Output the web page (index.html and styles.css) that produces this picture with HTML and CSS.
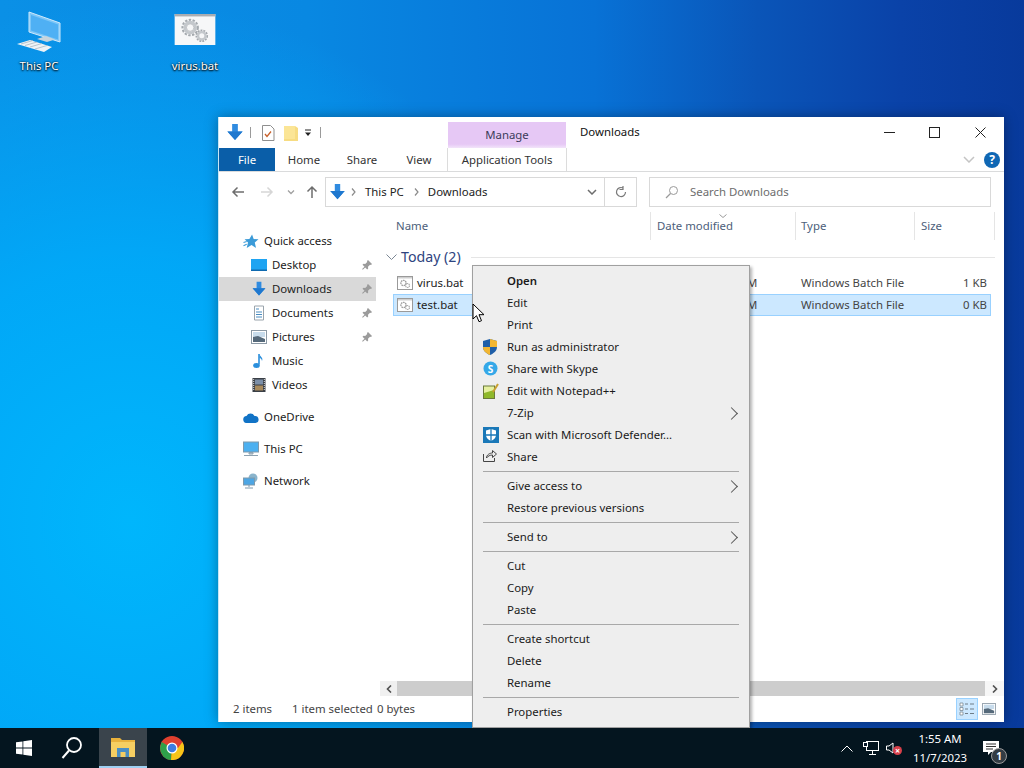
FILE: index.html
```html
<!DOCTYPE html>
<html lang="en">
<head>
  <meta charset="UTF-8" />
  <title>Downloads</title>
  <link rel="stylesheet" href="styles.css">
</head>
<body>
  <svg class="sprite" width="0" height="0">
    <defs>
      <symbol id="dl" viewBox="0 0 18 20">
        <path d="M6 1h6v8h5l-8 9-8-9h5z" fill="#2f8be0"/>
        <path d="M1 9h16l-8 9z" fill="#1f78cf"/>
      </symbol>
      <symbol id="bat" viewBox="0 0 16 14">
        <rect x=".5" y=".5" width="15" height="13" fill="#fff" stroke="#9a9a9a"/>
        <rect x="1" y="1" width="14" height="1.5" fill="#cfcfcf"/>
        <circle cx="6.5" cy="7" r="2.6" fill="none" stroke="#9a9a9a" stroke-width="1.3" stroke-dasharray="1.6 .7"/>
        <circle cx="10.5" cy="9.5" r="2" fill="none" stroke="#a8a8a8" stroke-width="1.2" stroke-dasharray="1.3 .6"/>
      </symbol>
      <symbol id="pin" viewBox="0 0 10 10">
        <path d="M6 0l4 4-1 1-1-.3-2 2 .2 1.8-1 .9-2-2-2.400 2.400-.7-.7L2.500 6.700l-2-2 1-1 1.700.2 2-2L5 1z" fill="#9b9b9b"/>
      </symbol>
      <symbol id="gear" viewBox="0 0 42 32">
        <circle cx="16" cy="14" r="5.500" fill="none" stroke="#c4c8cc" stroke-width="3"/>
        <circle cx="16" cy="14" r="8" fill="none" stroke="#a4a9ae" stroke-width="2" stroke-dasharray="2.500 1.500"/>
        <circle cx="16" cy="14" r="3.800" fill="none" stroke="#a4a9ae" stroke-width=".6"/>
        <circle cx="28" cy="22.500" r="3.800" fill="none" stroke="#c4c8cc" stroke-width="2.400"/>
        <circle cx="28" cy="22.500" r="5.700" fill="none" stroke="#a4a9ae" stroke-width="1.600" stroke-dasharray="2 1.100"/>
      </symbol>
      <symbol id="pic" viewBox="0 0 16 14">
        <rect x=".5" y=".5" width="15" height="13" fill="#fff" stroke="#8c9aa6"/>
        <rect x="2" y="2" width="12" height="5" fill="#c8dcec"/>
        <path d="M2 7l5-1 7 3v3H2z" fill="#55697a"/>
      </symbol>
    </defs>
  </svg>

  <div class="wall"></div>

  <div class="desk-icon desk-pc">
    <svg width="48" height="44" viewBox="0 0 48 44">
      <path d="M14 1l31 11v19L14 21z" fill="#7cc6f8" stroke="#cfe9fb"/>
      <path d="M16 4l27 9.500v15L16 19.500z" fill="#4fb0f4"/>
      <path d="M22 28l10 3 8-2.500-9-3.500z" fill="#c8d4dc"/>
      <path d="M2 33l13-4 22 7-8 5z" fill="#eef3f6"/>
      <path d="M6 33l12-3.500M10 34.500l12-3.500M15 36l12-3.500M20 38l12-3.500" stroke="#a9b8c2" stroke-width=".8"/>
    </svg>
    <span>This PC</span>
  </div>
  <div class="desk-icon desk-bat">
    <svg width="42" height="31" viewBox="0 0 42 32">
      <rect width="42" height="32" fill="#f6f7f8"/>
      <rect width="42" height="2.500" fill="#a9adb2"/>
      <use href="#gear" width="42" height="32"/>
    </svg>
    <span>virus.bat</span>
  </div>

  <div class="window">
    <div class="titlebar">
      <div class="qat">
        <svg class="q-dl" width="18" height="19"><use href="#dl"/></svg>
        <i class="q-sep"></i>
        <svg class="q-doc" width="14" height="16" viewBox="0 0 14 16">
          <path d="M1.500.5h8l3.500 3.500v11.500h-11.500z" fill="#fff" stroke="#8f8f8f"/>
          <path d="M4 9l2 2.500 4-5" fill="none" stroke="#c8602a" stroke-width="1.300"/>
        </svg>
        <svg class="q-folder" width="14" height="16" viewBox="0 0 14 16">
          <path d="M0 1h11l3 2v13H0z" fill="#f7dc82"/>
          <path d="M0 1h11v13H0z" fill="#fbe596"/>
        </svg>
        <svg class="q-drop" width="8" height="8" viewBox="0 0 8 8">
          <path d="M1 1h6" stroke="#222"/><path d="M1 3.500h6L4 7z" fill="#222"/>
        </svg>
        <i class="q-sep q-sep2"></i>
      </div>
      <div class="manage">Manage</div>
      <div class="win-title">Downloads</div>
      <div class="controls">
        <button class="ctl">
          <svg width="11" height="11"><path d="M0 5.500h11" stroke="#222"/></svg>
        </button>
        <button class="ctl">
          <svg width="11" height="11"><rect x=".5" y=".5" width="10" height="10" fill="none" stroke="#222"/></svg>
        </button>
        <button class="ctl">
          <svg width="11" height="11"><path d="M.5.500l10 10M10.500.500l-10 10" stroke="#222"/></svg>
        </button>
      </div>
    </div>

    <div class="ribbon">
      <div class="tab tab-file">File</div>
      <div class="tab tab-home">Home</div>
      <div class="tab tab-home">Share</div>
      <div class="tab tab-view">View</div>
      <div class="tab tab-tools">Application Tools</div>
      <div class="ribbon-right">
        <svg width="12" height="7" viewBox="0 0 12 7"><path d="M1 1l5 5 5-5" fill="none" stroke="#c4c4c4" stroke-width="1.500"/></svg>
        <div class="help">?</div>
      </div>
    </div>

    <div class="addrbar">
      <div class="navbtns">
        <svg class="nb nb-back" width="14" height="12" viewBox="0 0 14 12"><path d="M13 6H2M6.500 1.500L2 6l4.500 4.500" fill="none" stroke="#6d6d6d" stroke-width="1.500"/></svg>
        <svg class="nb nb-fwd" width="14" height="12" viewBox="0 0 14 12"><path d="M1 6h11M7.500 1.500L12 6l-4.500 4.500" fill="none" stroke="#d6d6d6" stroke-width="1.500"/></svg>
        <svg class="nb nb-hist" width="8" height="5" viewBox="0 0 8 5"><path d="M1 .5l3 3 3-3" fill="none" stroke="#a0a0a0" stroke-width="1.300"/></svg>
        <svg class="nb nb-up" width="12" height="14" viewBox="0 0 12 14"><path d="M6 13V2M1.500 6.500L6 2l4.500 4.500" fill="none" stroke="#6d6d6d" stroke-width="1.500"/></svg>
      </div>
      <div class="addr">
        <svg class="a-dl" width="17" height="18"><use href="#dl"/></svg>
        <svg class="a-gt" width="5" height="8" viewBox="0 0 5 8"><path d="M1 .5L4 4 1 7.500" fill="none" stroke="#8a8a8a" stroke-width="1.200"/></svg>
        <span class="a-txt">This PC</span>
        <svg class="a-gt" width="5" height="8" viewBox="0 0 5 8"><path d="M1 .5L4 4 1 7.500" fill="none" stroke="#8a8a8a" stroke-width="1.200"/></svg>
        <span class="a-txt">Downloads</span>
        <svg class="a-drop" width="10" height="6" viewBox="0 0 10 6"><path d="M1 1l4 4 4-4" fill="none" stroke="#6d6d6d" stroke-width="1.500"/></svg>
      </div>
      <div class="refresh">
        <svg width="12" height="12" viewBox="0 0 12 12"><path d="M10.500 6A4.500 4.500 0 1 1 8 2M8 0v3.500h-3.500" fill="none" stroke="#7a7a7a" stroke-width="1.200"/></svg>
      </div>
      <div class="search">
        <svg width="14" height="14" viewBox="0 0 14 14"><circle cx="8.500" cy="5.500" r="4" fill="none" stroke="#9a9a9a"/><path d="M5.500 8.500L1 13" stroke="#9a9a9a" stroke-width="1.200"/></svg>
        <span>Search Downloads</span>
      </div>
    </div>

    <div class="body">
      <div class="nav">
        <div class="nav-row top">
          <svg width="16" height="15" viewBox="0 0 14 14"><path d="M8 .5l1.500 4.200L14 5 10.500 8l1.200 5L7.500 10.300 3 13l1.200-5L1 5l4.500-.3z" fill="#3c9bd8"/><path d="M0 8l3-1M0 11l3-1.500" stroke="#3c9bd8"/></svg>
          <span>Quick access</span>
        </div>
        <div class="nav-row sub">
          <svg width="16" height="13" viewBox="0 0 16 13"><rect width="16" height="12" fill="#1ea4f2"/><rect y="10.500" width="16" height="1.500" fill="#0f6ab0"/></svg>
          <span>Desktop</span>
          <svg class="pin" width="10" height="10"><use href="#pin"/></svg>
        </div>
        <div class="nav-row sub active">
          <svg width="16" height="16"><use href="#dl"/></svg>
          <span>Downloads</span>
          <svg class="pin" width="10" height="10"><use href="#pin"/></svg>
        </div>
        <div class="nav-row sub">
          <svg width="16" height="16" viewBox="0 0 16 16"><path d="M3.500 1h9v14h-9z" fill="#fff" stroke="#9aa4ac"/><path d="M5 4h3M5 7h6M5 9.500h6M5 12h6" stroke="#4a8cc0"/></svg>
          <span>Documents</span>
          <svg class="pin" width="10" height="10"><use href="#pin"/></svg>
        </div>
        <div class="nav-row sub">
          <svg width="16" height="14"><use href="#pic"/></svg>
          <span>Pictures</span>
          <svg class="pin" width="10" height="10"><use href="#pin"/></svg>
        </div>
        <div class="nav-row sub">
          <svg width="16" height="16" viewBox="0 0 16 16"><path d="M8 1v10.500" stroke="#2b8fdc" stroke-width="1.600"/><ellipse cx="5.500" cy="12.500" rx="3.300" ry="2.500" fill="#2b8fdc"/><path d="M8.500 1c.5 3 4 3.500 2.500 7-.2-2-1.500-3-2.500-3z" fill="#2b8fdc"/></svg>
          <span>Music</span>
        </div>
        <div class="nav-row sub">
          <svg width="16" height="16" viewBox="0 0 16 16"><rect x="1.500" y="1" width="13" height="14" fill="#3a3f46"/><rect x="4" y="2.500" width="8" height="5" fill="#7c8fa8"/><rect x="4" y="8.500" width="8" height="5" fill="#a88a5c"/><path d="M2.700 2v12M13.300 2v12" stroke="#ddd" stroke-dasharray="1 1"/></svg>
          <span>Videos</span>
        </div>
        <div class="nav-row top gap">
          <svg width="16" height="11" viewBox="0 0 16 11"><path d="M4 11a3.500 3.500 0 0 1-.5-7A4.500 4.500 0 0 1 11.500 4 3.500 3.500 0 0 1 12.500 11z" fill="#1173c6"/></svg>
          <span>OneDrive</span>
        </div>
        <div class="nav-row top gap">
          <svg width="16" height="16" viewBox="0 0 16 16"><rect x=".5" y="1" width="15" height="10" fill="#4cb0f0" stroke="#7f99ac"/><path d="M6 11.500h4v1.500H6zM1 14.500h14" stroke="#8ea2b0" fill="#b8c6d0"/></svg>
          <span>This PC</span>
        </div>
        <div class="nav-row top gap">
          <svg width="16" height="16" viewBox="0 0 16 16"><circle cx="10" cy="5" r="4.500" fill="#8ab4cc"/><rect x=".5" y="5" width="11" height="7" fill="#4da6e4" stroke="#7f99ac"/><path d="M6 12v2M2 15h8" stroke="#7f99ac"/></svg>
          <span>Network</span>
        </div>
      </div>

      <div class="list">
        <div class="list-head">
          <div class="col col-name">Name</div>
          <div class="col col-date">Date modified
            <svg class="sort" width="8" height="4" viewBox="0 0 8 4"><path d="M.5.500L4 3.500 7.500.500" fill="none" stroke="#9a9a9a"/></svg>
          </div>
          <div class="col col-type">Type</div>
          <div class="col col-size">Size</div>
        </div>

        <div class="group">
          <svg width="11" height="7" viewBox="0 0 11 7"><path d="M.5.500l5 5 5-5" fill="none" stroke="#7b8794"/></svg>
          <span>Today (2)</span>
          <i></i>
        </div>

        <div class="file">
          <svg width="16" height="14"><use href="#bat"/></svg>
          <span class="f-name">virus.bat</span>
          <span class="f-date">11/7/2023 1:55 AM</span>
          <span class="f-type">Windows Batch File</span>
          <span class="f-size">1 KB</span>
        </div>
        <div class="file selected">
          <svg width="16" height="14"><use href="#bat"/></svg>
          <span class="f-name">test.bat</span>
          <span class="f-date">11/7/2023 1:55 AM</span>
          <span class="f-type">Windows Batch File</span>
          <span class="f-size">0 KB</span>
        </div>

        <div class="hscroll">
          <div class="sb-btn"><svg width="6" height="8" viewBox="0 0 6 8"><path d="M5 .5L1.500 4 5 7.500" fill="none" stroke="#505050" stroke-width="1.600"/></svg></div>
          <div class="sb-thumb"></div>
          <div class="sb-btn sb-r"><svg width="6" height="8" viewBox="0 0 6 8"><path d="M1 .5L4.500 4 1 7.500" fill="none" stroke="#505050" stroke-width="1.600"/></svg></div>
        </div>
      </div>
    </div>

    <div class="statusbar">
      <span class="s-items">2 items</span>
      <span class="s-sel">1 item selected</span>
      <span>0 bytes</span>
      <div class="views">
        <div class="view on">
          <svg width="16" height="16" viewBox="0 0 16 16"><path d="M1 2h3v3H1zM1 6.500h3v3H1zM1 11h3v3H1z" fill="#fff" stroke="#7c8a96" stroke-width=".8"/><path d="M6 3h3M11 3h4M6 8h3M11 8h4M6 12.500h3M11 12.500h4" stroke="#6f7d88"/></svg>
        </div>
        <div class="view">
          <svg width="14" height="12"><use href="#pic"/></svg>
        </div>
      </div>
    </div>
  </div>

  <div class="menu">
    <div class="mi strong">Open</div>
    <div class="mi">Edit</div>
    <div class="mi">Print</div>
    <div class="mi">
      <svg class="mi-ico" width="14" height="16" viewBox="0 0 14 16">
        <path d="M7 0l7 2v6c0 4-3.500 6.500-7 8-3.500-1.500-7-4-7-8V2z" fill="#1f5fa8"/>
        <path d="M7 0l7 2v6H7zM7 8v8C3.500 14.500 0 12 0 8z" fill="#f2b632"/>
      </svg>
      Run as administrator
    </div>
    <div class="mi">
      <svg class="mi-ico" width="15" height="15" viewBox="0 0 15 15"><circle cx="7.500" cy="7.500" r="7" fill="#35a8e8"/><text x="7.500" y="11.500" class="sk">S</text></svg>
      Share with Skype
    </div>
    <div class="mi">
      <svg class="mi-ico" width="16" height="16" viewBox="0 0 16 16">
        <rect x=".5" y="3" width="11" height="12.500" fill="#e6f0a0" stroke="#6b7a3a"/>
        <path d="M1 10l10-3v8H1z" fill="#8fb82a"/>
        <path d="M10 9l5-8" stroke="#c8a030" stroke-width="2"/>
      </svg>
      Edit with Notepad++
    </div>
    <div class="mi arrow">7-Zip</div>
    <div class="mi">
      <svg class="mi-ico" width="16" height="16" viewBox="0 0 16 16">
        <rect width="16" height="16" fill="#1a78b8"/>
        <path d="M8 2l5 1.500V8c0 3-2.500 5-5 6-2.500-1-5-3-5-6V3.500z" fill="#fff"/>
        <path d="M8 2v12M3 8h10" stroke="#1a78b8" stroke-width="1.300"/>
      </svg>
      Scan with Microsoft Defender...
    </div>
    <div class="mi">
      <svg class="mi-ico" width="14" height="13" viewBox="0 0 14 13">
        <path d="M.5 5v7.500h11V9" fill="none" stroke="#444"/>
        <path d="M3.500 9c0-3 3-5 6-5V1.500l4 3.500-4 3.500V6C7 6 5 7 3.500 9z" fill="none" stroke="#444"/>
      </svg>
      Share
    </div>
    <div class="msep"></div>
    <div class="mi arrow">Give access to</div>
    <div class="mi">Restore previous versions</div>
    <div class="msep"></div>
    <div class="mi arrow">Send to</div>
    <div class="msep"></div>
    <div class="mi">Cut</div>
    <div class="mi">Copy</div>
    <div class="mi">Paste</div>
    <div class="msep"></div>
    <div class="mi">Create shortcut</div>
    <div class="mi">Delete</div>
    <div class="mi">Rename</div>
    <div class="msep"></div>
    <div class="mi">Properties</div>
  </div>

  <svg class="cursor" width="13" height="20" viewBox="0 0 13 20">
    <path d="M1 1v15l3.500-3.300 2.500 6 2.500-1-2.500-6h5z" fill="#fff" stroke="#000" stroke-width="1"/>
  </svg>

  <div class="taskbar">
    <div class="tb-btn">
      <svg width="16" height="16" viewBox="0 0 16 16"><path d="M0 2.300l6.500-.9v6.200H0zM7.300 1.300L16 0v7.600H7.300zM0 8.400h6.500v6.200L0 13.700zM7.300 8.400H16V16l-8.700-1.300z" fill="#fff"/></svg>
    </div>
    <div class="tb-btn">
      <svg width="22" height="24" viewBox="0 0 22 24"><circle cx="13" cy="9" r="7" fill="none" stroke="#fff" stroke-width="1.800"/><path d="M8 14.500L1.500 22" stroke="#fff" stroke-width="2"/></svg>
    </div>
    <div class="tb-btn tb-active">
      <svg width="24" height="20" viewBox="0 0 24 20">
        <path d="M0 1h9l2 2h13v4H0z" fill="#e9b23c"/>
        <rect y="5" width="24" height="15" fill="#f6cf62"/>
        <rect x="6" y="11" width="12" height="9" fill="#4b8fc4"/>
        <rect x="9.500" y="15" width="5" height="5" fill="#f6cf62"/>
      </svg>
    </div>
    <div class="tb-btn tb-chrome">
      <svg width="24" height="24" viewBox="0 0 24 24">
        <circle cx="12" cy="12" r="12" fill="#e0402f"/>
        <path d="M12 12L1.600 6 0 12a12 12 0 0 0 11 12z" fill="#2fa04a"/>
        <path d="M12 12l6 0 4.400-6A12 12 0 0 1 11 24z" fill="#f7c518"/>
        <circle cx="12" cy="12" r="5.500" fill="#fff"/>
        <circle cx="12" cy="12" r="4.300" fill="#3f7de0"/>
      </svg>
    </div>
    <div class="tray">
      <svg class="t-chev" width="12" height="7" viewBox="0 0 12 7"><path d="M.5 6.500L6 1l5.500 5.500" fill="none" stroke="#fff"/></svg>
      <svg class="t-net" width="16" height="14" viewBox="0 0 16 14"><rect x="3.500" y=".5" width="12" height="9" fill="none" stroke="#fff"/><rect x=".5" y="1.500" width="4" height="4" fill="#05182a" stroke="#fff"/><path d="M9.500 10v3M6 13.500h7" stroke="#fff"/></svg>
      <div class="t-vol">
        <svg width="10" height="12" viewBox="0 0 10 12"><path d="M.5 4h2.500L7 1v10L3 8H.5z" fill="none" stroke="#fff"/></svg>
        <b class="t-x">×</b>
      </div>
      <div class="clock"><span>1:55 AM</span><span>11/7/2023</span></div>
      <div class="notif">
        <svg width="16" height="14" viewBox="0 0 16 14"><path d="M0 0h16v11H8l-3 3v-3H0z" fill="#fff"/><path d="M3 3h10M3 5.500h10M3 8h7" stroke="#333"/></svg>
        <b class="badge">1</b>
      </div>
    </div>
  </div>
</body>
</html>
```

FILE: styles.css
```css
* {
  box-sizing: border-box;
  font-family: "Noto Sans", sans-serif;
}

body {
  margin: 0;
  width: 1024px;
  height: 768px;
  position: relative;
  overflow: hidden;
  font-size: 11.4px;
  color: #1f1f1f;
}

.sprite {
  position: absolute;
}

.wall {
  position: absolute;
  top: 0;
  left: 0;
  width: 100%;
  height: 100%;
  background:
    radial-gradient(ellipse 480px 520px at 130px 520px, #00b6fc 0%, rgba(0, 172, 250, 0.85) 50%, rgba(0, 150, 240, 0) 100%),
    linear-gradient(90deg, #0a90e6 0%, #0888e2 30%, #0872d6 58%, #0a55b8 74%, #0a42a8 88%, #083a9c 100%);
}

/* desktop */
.desk-icon {
  position: absolute;
  width: 76px;
  display: flex;
  flex-direction: column;
  align-items: center;
  color: #fff;
  font-size: 11.4px;
  text-shadow: 0 1px 2px #000, 0 0 2px #000;
}

.desk-icon span {
  line-height: 16px;
}

.desk-pc {
  left: 1px;
  top: 11px;
}

.desk-pc span {
  margin-top: 3px;
}

.desk-bat {
  left: 157px;
  top: 14px;
}

.desk-bat span {
  margin-top: 13px;
}

/* window */
.window {
  position: absolute;
  left: 218px;
  top: 117px;
  width: 786px;
  height: 605px;
  background: #fff;
  border-left: 1px solid #c8e6f5;
  box-shadow: 0 0 12px rgba(0, 0, 0, 0.35);
  display: flex;
  flex-direction: column;
}

.titlebar {
  height: 31px;
  display: flex;
  flex: none;
}

.qat {
  width: 229px;
  display: flex;
  align-items: center;
  padding-left: 7px;
}

.q-sep {
  width: 1px;
  height: 11px;
  background: #9a9a9a;
  margin-left: 6px;
}

.q-doc {
  margin-left: 10px;
}

.q-folder {
  margin-left: 9px;
}

.q-drop {
  margin-left: 6px;
}

.q-sep2 {
  margin-left: 8px;
}

.manage {
  width: 118px;
  margin-top: 5px;
  background: linear-gradient(#e6c8f5 85%, #f2e4fa);
  color: #3c3c5a;
  text-align: center;
  line-height: 26px;
}

.win-title {
  padding: 7px 0 0 14px;
  color: #111;
}

.controls {
  margin-left: auto;
  display: flex;
  padding-right: 1px;
}

.ctl {
  width: 45.5px;
  height: 31px;
  border: none;
  background: none;
  padding: 0;
}

.ribbon {
  height: 24px;
  flex: none;
  display: flex;
  border-bottom: 1px solid #dadbdc;
  color: #333;
}

.tab {
  text-align: center;
  line-height: 23px;
}

.tab-file {
  width: 56px;
  background: #0a5ea8;
  color: #fff;
}

.tab-home {
  width: 58px;
}

.tab-view {
  width: 56px;
}

.tab-tools {
  width: 120px;
  border-left: 1px solid #dcdcdc;
  border-right: 1px solid #dcdcdc;
}

.ribbon-right {
  margin-left: auto;
  display: flex;
  align-items: center;
  gap: 9px;
  padding-right: 4px;
}

.help {
  width: 16px;
  height: 16px;
  border-radius: 50%;
  background: #0f67b4;
  color: #fff;
  font-weight: bold;
  font-size: 12px;
  line-height: 16px;
  text-align: center;
}

.addrbar {
  height: 40px;
  flex: none;
  display: flex;
  align-items: flex-start;
  padding-top: 5px;
}

.navbtns {
  width: 106px;
  height: 30px;
  display: flex;
  align-items: center;
  padding-left: 12px;
}

.nb-fwd {
  margin-left: 15px;
}

.nb-hist {
  margin-left: 13px;
}

.nb-up {
  margin-left: 11px;
}

.addr {
  width: 280px;
  height: 30px;
  border: 1px solid #d9d9d9;
  display: flex;
  align-items: center;
  padding-left: 3px;
  color: #222;
}

.a-gt {
  margin-left: 5px;
}

.a-txt {
  margin: 0 5px 2px 9px;
}

.a-drop {
  margin-left: auto;
  margin-right: 7px;
}

.refresh {
  width: 32px;
  height: 30px;
  border: 1px solid #d9d9d9;
  border-left: none;
  display: flex;
  align-items: center;
  justify-content: center;
}

.search {
  width: 342px;
  height: 30px;
  margin-left: 12px;
  border: 1px solid #d9d9d9;
  display: flex;
  align-items: center;
  gap: 11px;
  padding-left: 15px;
  color: #6d6d6d;
}

.search span {
  margin-bottom: 2px;
}

.body {
  flex: 1;
  min-height: 0;
  display: flex;
}

.nav {
  width: 157px;
  flex: none;
  padding-top: 17px;
  color: #222;
}

.nav-row {
  height: 24px;
  display: flex;
  align-items: center;
  position: relative;
}

.nav-row span {
  margin-bottom: 2px;
}

.nav-row.top {
  padding-left: 24px;
  gap: 5px;
}

.nav-row.sub {
  padding-left: 32px;
  gap: 5px;
}

.nav-row svg {
  flex: none;
}

.nav-row.gap {
  margin-top: 8px;
}

.nav-row.active {
  background: #d9d9d9;
}

.pin {
  margin-left: auto;
  margin-right: 4px;
}

.list {
  flex: 1;
  min-width: 0;
  position: relative;
  display: flex;
  flex-direction: column;
  color: #444;
}

.list-head {
  height: 31px;
  display: flex;
  flex: none;
  color: #4c607a;
}

.col {
  height: 28px;
  padding-top: 6px;
  border-left: 1px solid #e5e5e5;
  position: relative;
}

.col-name {
  width: 274px;
  border-left: none;
  padding-left: 20px;
}

.col-date {
  width: 145px;
  padding-left: 6px;
}

.col-type {
  width: 119px;
  padding-left: 5px;
}

.col-size {
  width: 81px;
  padding-left: 6px;
  border-right: 1px solid #e5e5e5;
}

.sort {
  position: absolute;
  left: 68px;
  top: 2px;
}

.group {
  height: 29px;
  display: flex;
  align-items: center;
  padding-left: 10px;
  color: #2e4480;
  font-size: 14.2px;
  gap: 4px;
}

.group span {
  margin-bottom: 3px;
}

.group i {
  flex: 1;
  height: 1px;
  background: #e5e5e5;
  margin: 0 9px 0 6px;
}

.file {
  height: 22px;
  width: 598px;
  margin-left: 17px;
  border: 1px solid transparent;
  display: flex;
  align-items: center;
  padding-left: 3px;
}

.file span {
  margin-bottom: 2px;
}

.file.selected {
  background: #cce8ff;
  border-color: #99d1ff;
}

.f-name {
  width: 240px;
  margin-left: 4px;
  color: #222;
}

.f-date {
  width: 144px;
}

.f-type {
  flex: 1;
}

.f-size {
  padding-right: 3px;
}

.hscroll {
  margin-top: auto;
  margin-left: 4px;
  height: 15px;
  flex: none;
  display: flex;
}

.sb-btn {
  width: 17px;
  background: #f0f0f0;
  display: flex;
  align-items: center;
  justify-content: center;
}

.sb-r {
  width: 19px;
  background: #f6f6f6;
}

.sb-thumb {
  flex: 1;
  background: #cdcdcd;
}

.statusbar {
  height: 26px;
  flex: none;
  display: flex;
  align-items: center;
  padding-left: 14px;
  color: #444;
}

.statusbar span {
  margin-bottom: 2px;
}

.s-items {
  width: 59px;
}

.s-sel {
  width: 85px;
}

.views {
  margin-left: auto;
  display: flex;
  align-items: center;
  margin-right: 4px;
}

.view {
  width: 22px;
  height: 22px;
  display: flex;
  align-items: center;
  justify-content: center;
  border: 1px solid transparent;
}

.view.on {
  background: #cce8ff;
  border-color: #99d1ff;
}

/* context menu */
.menu {
  position: absolute;
  left: 472px;
  top: 265px;
  width: 278px;
  height: 463px;
  background: #eeeeee;
  border: 1px solid #a0a0a0;
  box-shadow: 2px 2px 3px rgba(0, 0, 0, 0.3);
  padding: 4px 0;
  color: #1a1a1a;
}

.mi {
  height: 22px;
  line-height: 22px;
  padding-left: 34px;
  position: relative;
}

.mi.strong {
  font-weight: 600;
}

.mi-ico {
  position: absolute;
  left: 10px;
  top: 3px;
}

.mi.arrow::after {
  content: "";
  position: absolute;
  right: 13px;
  top: 7px;
  width: 8px;
  height: 8px;
  border-top: 1px solid #555;
  border-right: 1px solid #555;
  transform: rotate(45deg);
}

.msep {
  height: 7px;
  margin: 0 10px;
  background: linear-gradient(#a8a8a8, #a8a8a8) center / 100% 1px no-repeat;
}

.sk {
  font-size: 10px;
  font-weight: bold;
  fill: #fff;
  text-anchor: middle;
}

.cursor {
  position: absolute;
  left: 472px;
  top: 303px;
}

/* taskbar */
.taskbar {
  position: absolute;
  left: 0;
  bottom: 0;
  width: 100%;
  height: 40px;
  background: #04151f;
  display: flex;
  color: #fff;
}

.tb-btn {
  width: 48px;
  height: 40px;
  display: flex;
  align-items: center;
  justify-content: center;
}

.tb-active {
  margin-left: 3px;
  background: #3a444c;
  border-bottom: 2px solid #9fd0f2;
}

.tb-chrome {
  margin-left: 1px;
}

.tray {
  margin-left: auto;
  display: flex;
  align-items: center;
}

.t-net {
  margin-left: 10px;
}

.t-vol {
  margin-left: 7px;
  width: 17px;
  height: 18px;
  position: relative;
  display: flex;
  align-items: center;
}

.t-x {
  position: absolute;
  left: 7px;
  top: 7px;
  width: 9px;
  height: 9px;
  border-radius: 50%;
  background: #d8404a;
  font-size: 9px;
  line-height: 9px;
  text-align: center;
  color: #fff;
}

.clock {
  width: 64px;
  margin-left: 5px;
  display: flex;
  flex-direction: column;
  align-items: center;
  line-height: 19px;
}

.notif {
  width: 52px;
  height: 40px;
  display: flex;
  align-items: center;
  padding-left: 11px;
  position: relative;
}

.badge {
  position: absolute;
  left: 19px;
  top: 20px;
  width: 16px;
  height: 16px;
  border-radius: 50%;
  border: 1px solid #9a9a9a;
  background: #333c44;
  font-size: 10px;
  line-height: 14px;
  text-align: center;
  color: #fff;
}
```
